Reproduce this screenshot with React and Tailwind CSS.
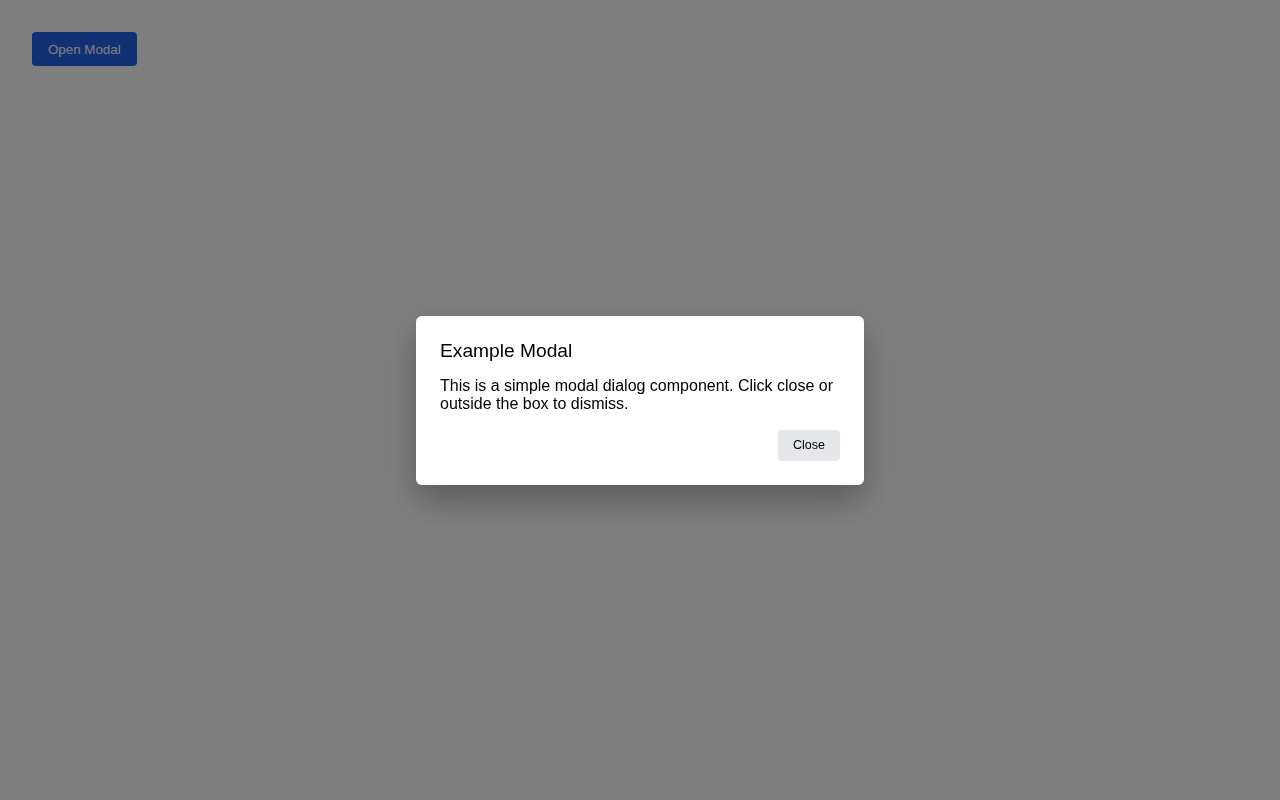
export default function App() {
  return (
    <div className="relative w-full h-[800px] bg-white" style={{ fontFamily: '"Liberation Sans", Arial, sans-serif' }}>
      <div className="p-8">
        <button className="bg-[#2563eb] text-white rounded px-4 pt-[10px] pb-[8px] text-[13.33px] leading-[16px]">Open Modal</button>
      </div>
      <div className="fixed inset-0 bg-black/50 flex items-center justify-center">
        <div className="bg-white rounded-md shadow-[0_15px_35px_rgba(0,0,0,0.3)] w-[448px] p-6 text-black">
          <h2 className="text-[19.2px] leading-[21px]">Example Modal</h2>
          <p className="mt-4 text-[16px] leading-[18px]">This is a simple modal dialog component. Click close or outside the box to dismiss.</p>
          <div className="mt-[17px] flex justify-end">
            <button className="bg-gray-200 rounded px-[15px] pt-[8px] pb-[8px] text-[12.5px] leading-[15px]">Close</button>
          </div>
        </div>
      </div>
    </div>
  );
}
